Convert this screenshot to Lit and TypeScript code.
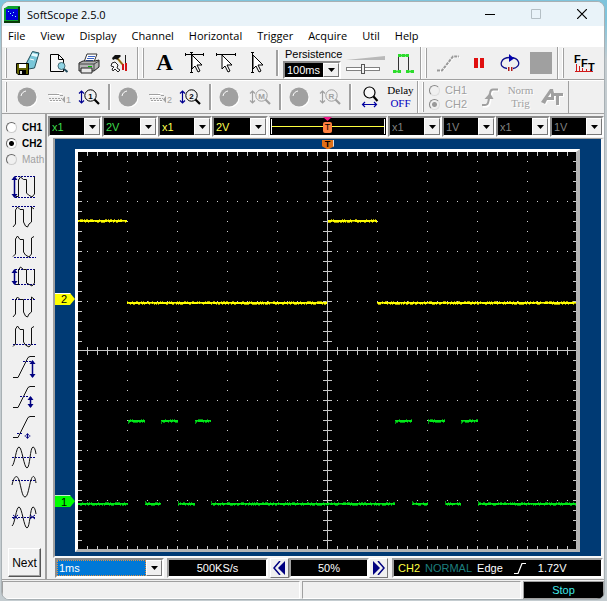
import { LitElement, html, svg, css, nothing } from "lit";
import type { SVGTemplateResult } from "lit";
import { customElement, property } from "lit/decorators.js";
import { classMap } from "lit/directives/class-map.js";
import { styleMap } from "lit/directives/style-map.js";

/* ---------- icons: toolbar glyphs use a 27x26 box, measurement glyphs 27x30 ---------- */

const ARROW = "M0 0V14L3 11L6 17L8 16L5 10H10Z";

const lens = (mark: string, ink: string, arrow: string) => svg`
  <path d="M5.5 7V19M3 9.5L5.5 7L8 9.5M3 16.5L5.5 19L8 16.5" stroke=${arrow} fill="none" stroke-width="1.2"/>
  <circle cx="14.5" cy="11.5" r="5.7" fill="none" stroke=${ink}/>
  <path d="M18.500 15.500L23 20" stroke=${ink} stroke-width="2.2"/>
  <text x="14.500" y="14.500" text-anchor="middle" font-size="8" font-weight="bold" fill=${ink}>${mark}</text>`;

const reference = (mark: string) => svg`
  <path d="M4 11.5H18M12 9.5H17M4 17.5H16" stroke="#fff" fill="none"/>
  <path d="M3 10.5H14L15 11.500H18" stroke="#a0a0a0" fill="none"/>
  <path d="M4 14.5H17M5 16.500H17" stroke="#a0a0a0" stroke-dasharray="2 1" fill="none"/>
  <path d="M17 15.500L20 12V19Z" fill="#a0a0a0"/>
  <text x="21" y="19" font-size="9" fill="#a0a0a0">${mark}</text>`;

const icons: Record<string, SVGTemplateResult> = {
  save: svg`
    <path d="M12.500 13L18.500 1.500L25 3L20.500 18L14.500 19Z" fill="#79c6d8" stroke="#24505c"/>
    <path d="M18.500 3L24 4.500L23 7L17 5.500Z" fill="#e8fbff"/><path d="M16 9L20 10" stroke="#fff"/>
    <path d="M2.500 13.500H14.500V24.500H4L2.500 23Z" fill="#606000" stroke="#000"/>
    <path d="M5 14H12V18H5Z" fill="#fff"/><path d="M5 20H12V24H5Z" fill="#000"/><path d="M6 21H8V24H6Z" fill="#ddd"/>`,
  preview: svg`
    <path d="M5.500 4.500H13.500L18.500 9.500V21.500H5.500Z" fill="#f8f8f8" stroke="#000"/>
    <path d="M13.500 4.500V9.500H18.500" fill="none" stroke="#000"/>
    <circle cx="16.500" cy="16" r="3.500" fill="#8fd4e4" stroke="#476d78"/>
    <path d="M19 19L22.500 22" stroke="#20485a" stroke-width="2"/>`,
  print: svg`
    <path d="M8 12L11 4H21L18 12Z" fill="#fff" stroke="#333"/>
    <path d="M12 6.500H19M11 8.500H18M10 10.500H17" stroke="#3b63c4"/>
    <path d="M3 13L7 11H19L23 10V17L18 21H3Z" fill="#b4b4b4" stroke="#222"/>
    <path d="M3 14H18L23 11M18 14V21" stroke="#444" fill="none"/>
    <path d="M5 18H16V23H5Z" fill="#e8e8e8" stroke="#222"/><path d="M12 16H16V17H12Z" fill="#0b0"/>`,
  tools: svg`
    <path d="M5 8L8 5H13L14 6L12 8L11 10L8 9L6 10Z" fill="#111"/>
    <path d="M11 9L16 15" stroke="#c09018" stroke-width="2"/>
    <path d="M11 9L16 15" stroke="#222" stroke-width="0.600"/>
    <path d="M15 14H17V20H15ZM18 13H20V21H18Z" fill="#d21414"/>
    <path d="M18.500 5V13" stroke="#222"/>
    <path d="M5 13L8 12L11 15L10 18L13 20L11 22L8 19L6 21L5 19L7 17L4 16Z" stroke="#222" fill="#f4f4f4"/>`,
  cursorBoth: svg`
    <path d="M3 4.500H22M3.500 3V6M21.500 3V6M9.500 3V22M8 2.500H11M8 22.500H11" stroke="#000"/>
    <g transform="translate(10 5)"><path d=${ARROW} fill="#fff" stroke="#000"/></g>`,
  cursorH: svg`
    <path d="M3 4.500H23M3.500 3V6M22.500 3V6" stroke="#000"/>
    <g transform="translate(9 5)"><path d=${ARROW} fill="#fff" stroke="#000"/></g>`,
  cursorV: svg`
    <path d="M8.500 2V22M7 2.500H10M7 22.500H10" stroke="#000"/>
    <g transform="translate(9 5)"><path d=${ARROW} fill="#fff" stroke="#000"/></g>`,
  pulse: svg`
    <path d="M8.500 7V20M18.500 7V20" stroke="#333"/>
    <path d="M8 5.500H19M3 21.500H11M16 21.500H24" stroke="#2bdc2b" stroke-width="2"/>
    <path d="M8 4H11V7H8ZM12 4H15V7H12ZM16 4H19V7H16ZM3 20H6V23H3ZM8 20H11V23H8ZM16 20H19V23H16ZM21 20H24V23H21Z" fill="#2bdc2b"/>`,
  interpolate: svg`
    <path d="M3 20.500H8L19 6.500H25" fill="none" stroke="#fff" transform="translate(1 1)"/>
    <path d="M3 20.500H8L19 6.500H25" fill="none" stroke="#999" stroke-width="2" stroke-dasharray="3 1"/>`,
  pause: svg`<path d="M9 8H13V18H9ZM15 8H19V18H15Z" fill="#e01010"/>`,
  loop: svg`
    <path d="M11 18.500C6 18 4.500 15 5.500 12C6.500 9 10 7.500 14 7.500C18 7.500 21.500 9 22.500 12C23.500 15 21 18 17 18.500" fill="none" stroke="#10108c" stroke-width="1.300"/>
    <path d="M13 4L18 8.500L13 12Z" fill="#0000b0"/>
    <path d="M12 17H13.500V21H12ZM15 17H16.500V21H15Z" fill="#b01818"/>`,
  stop: svg`<path d="M3 2H25V24H3Z" fill="#a0a0a0"/>`,
  fft: svg`
    <path d="M4 21.500H22M5.500 21V14M8.500 21V16M11.500 21V18M15.500 21V19M19.500 21V19" stroke="#d01818"/>
    <g font-weight="bold" font-size="11" fill="#000">
      <text x="3" y="13">F</text><text x="10" y="17">F</text><text x="17" y="21">T</text></g>`,
  ball: svg`
    <circle cx="14" cy="14" r="9.500" fill="#fff"/><circle cx="13" cy="13" r="9.500" fill="#a0a0a0"/>
    <path d="M7 12C7.500 9 9.500 7.500 12 7" stroke="#fff" fill="none"/>`,
  ref1: reference("1"),
  ref2: reference("2"),
  lens1: lens("1", "#000", "#000090"),
  lens2: lens("2", "#000", "#000090"),
  lensM: lens("M", "#a0a0a0", "#a0a0a0"),
  lensR: lens("R", "#a0a0a0", "#a0a0a0"),
  zoomH: svg`
    <circle cx="13.500" cy="8.500" r="5.500" fill="#f8f8f8" stroke="#000" stroke-width="1.200"/>
    <path d="M17.500 12.500L21.500 17" stroke="#000" stroke-width="2.200"/>
    <path d="M6 20.500H21M9 18L6.500 20.500L9 23M18 18L20.500 20.500L18 23" stroke="#0000a0" stroke-width="1.200" fill="none"/>`,
  edge: svg`
    <path d="M6 21.500H10Q12.500 21 13 17L14.500 9Q15 5.500 18 5.500H22" fill="none" stroke="#fff" stroke-width="2" transform="translate(1 1)"/>
    <path d="M6 21H9Q12 21 12.500 17L14 9Q14.500 5.500 17 5.500H22" fill="none" stroke="#a0a0a0" stroke-width="2"/>
    <path d="M8.500 15L14 9L17.500 15Z" fill="#a0a0a0"/>`,
  autoTrig: svg`
    <path d="M3 18L12 5H15L16 9H25V12H21L21 21H18L18 12H16L16 16H9L7 20Z" fill="#fff" transform="translate(1 1)"/>
    <path d="M3 18L12 5H15L16 9H25V12H21L21 21H18L18 12H16L16 16H9L7 20ZM10 13H13V9Z" fill="#a0a0a0" fill-rule="evenodd"/>`,
};

const NAVY = "#000080";
const vArrow = (x: number, a: number, b: number) => svg`
  <path d="M${x} ${a}V${b}" stroke=${NAVY} stroke-width="1.500"/>
  <path d="M${x} ${a - 1}L${x + 3} ${a + 3}H${x - 3}ZM${x} ${b + 1}L${x + 3} ${b - 3}H${x - 3}Z" fill=${NAVY}/>`;
const dash = (y: number, a = 1, b = 25) => svg`<path d="M${a} ${y}.5H${b}" stroke=${NAVY} stroke-dasharray="2 1"/>`;
const ink = (d: string) => svg`<path d=${d} fill="none" stroke="#111"/>`;
const SQUARE = "M5 24.500H7.500V8L9.500 5L12.500 7.500H15.500V21L17.500 23L21 25L23.500 22V5";
const SQUARE_TOP = "M2 25L4.500 22V8L6.500 5L9 7.500H12.500V20L14.500 24L16.500 25L18 22L20.500 20V5L23 7";
const SQUARE_LOW = "M2 24.500L4.500 22V7L6.500 4L9 7.500H12.500V20L14.500 23L18 25L20.500 22V6L23 4.500";
const SQUARE_MID = "M5 22.500H7.500V8L9.500 5L12.500 7.500H15.500V21L17.500 22L21 24L23.500 21V7";
const SLOPE = "M2 25.500H7L17 5.500L19 4.500H24";
const SINE = "M1 24C4 22 5 5 8 5S13 26 16 26S19 5 22 5Q24 5 25 12";

const measures: [string, SVGTemplateResult][] = [
  ["Peak to peak", svg`${vArrow(3.5, 5, 25)}${dash(4, 4)}${dash(25, 4)}${ink(SQUARE)}`],
  ["Maximum", svg`${dash(4)}${ink(SQUARE_TOP)}`],
  ["Minimum", svg`${dash(25, 3)}${ink(SQUARE_LOW)}`],
  ["Amplitude", svg`${vArrow(3.5, 8, 22)}${dash(7, 4)}${dash(22, 4)}${ink(SQUARE_MID)}`],
  ["Top", svg`${dash(7)}${ink(SQUARE_TOP)}`],
  ["Base", svg`${dash(22, 2)}${ink(SQUARE_LOW)}`],
  ["High level", svg`${ink(SLOPE)}${dash(9, 12, 20)}${vArrow(21.5, 9, 25)}`],
  ["Middle level", svg`${ink(SLOPE)}${dash(14, 9, 18)}${vArrow(19.5, 15, 25)}`],
  ["Low level", svg`${ink(SLOPE)}${dash(21, 6, 12)}${vArrow(16.5, 22, 26)}`],
  ["Mean", svg`${dash(15)}${ink(SINE)}`],
  ["Cycle mean", svg`${dash(8)}${ink("M1 13C3 4 6 2 8 8C10 14 11 25 14 25S18 14 20 8S24 4 25 11")}`],
  ["RMS", svg`${dash(15)}${ink(SINE)}<path d="M2 13L7 17M7 13L2 17M19 13L24 17M24 13L19 17" stroke=${NAVY}/>`],
];

const toolStyles = css`
  * { box-sizing: border-box; }
  button {
    display: flex; align-items: center; justify-content: center;
    padding: 0; border: 0; background: none; color: #000; font: inherit;
  }
  svg { display: block; flex: none; }
`;

/* ---------- drop-down with a raised arrow ---------- */
@customElement("scope-select")
export class ScopeSelect extends LitElement {
  @property() label = "";
  @property() value = "";
  @property() tone = "green";

  static styles = css`
    * { box-sizing: border-box; }
    :host { display: block; height: 20px; }
    .box {
      position: relative; height: 100%; background: #000;
      border: 2px solid; border-color: #8c8c8c #fff #fff #8c8c8c;
    }
    select {
      appearance: none; display: block; width: 100%; height: 100%; margin: 0;
      padding: 0 16px 0 2px; border: 0; border-radius: 0; background: #000;
      font: 11px "Liberation Sans", sans-serif; outline: none;
    }
    .green { color: #3fdc4c; }
    .yellow { color: #ffff50; }
    .grey { color: #808080; }
    .white { color: #fff; }
    .picked { color: #fff; background: #0078d7; border: 1px dotted #e09040; width: calc(100% - 16px); padding: 0 2px 0 1px; }
    .arrow {
      position: absolute; top: 0; right: 0; width: 16px; height: 100%; pointer-events: none;
      display: flex; align-items: center; justify-content: center; background: #f0f0f0;
      border: 1px solid; border-color: #fff #777 #777 #fff;
    }
  `;

  render() {
    return html`<div class="box">
      <select class=${this.tone} aria-label=${this.label}><option>${this.value}</option></select>
      <span class="arrow"><svg width="7" height="4" viewBox="0 0 7 4"><path d="M0 0H7L3.500 4Z"/></svg></span>
    </div>`;
  }
}

/* ---------- two rows of tools ---------- */
@customElement("scope-toolbars")
export class ScopeToolbars extends LitElement {
  static styles = [toolStyles, css`
    :host { display: block; background: #f0f0f0; font: 12px "Liberation Sans", sans-serif; }
    .row { display: flex; height: 34px; border-top: 1px solid #fff; border-bottom: 1px solid #a0a0a0; }
    .group { display: flex; align-items: center; border-right: 1px solid #a0a0a0; padding-right: 1px; }
    .group + .group { border-left: 1px solid #fff; }
    .last { border-right: 0; padding-right: 0; }
    .grip { width: 2px; height: 30px; margin: 0 5px 0 3px; border-left: 1px solid #fff; border-right: 1px solid #a0a0a0; flex: none; }
    .sep { width: 8px; height: 26px; flex: none; display: flex; justify-content: center; }
    .sep::before { content: ""; width: 2px; background: #a0a0a0; border-right: 1px solid #fff; }
    button { width: 31px; height: 30px; flex: none; }
    .letter { font: bold 23px "Liberation Serif", serif; }
    .persist { width: 58px; margin-left: 2px; align-self: stretch; }
    .persist label { display: block; height: 14px; line-height: 14px; font-size: 11px; padding-left: 2px; white-space: nowrap; }
    .persist scope-select { height: 18px; }
    .level { width: 47px; padding: 4px 3px 0 5px; }
    .level svg { width: 100%; }
    input[type="range"] { appearance: none; display: block; width: 34px; height: 12px; margin: 2px 0 0; background: none; }
    input[type="range"]::-webkit-slider-runnable-track { height: 4px; background: #fff; border: 1px solid #808080; }
    input[type="range"]::-webkit-slider-thumb { appearance: none; width: 4px; height: 10px; margin-top: -4px; background: #f0f0f0; border: 1px solid #555; }
    .words { font: 11px/13px "Liberation Serif", serif; flex-direction: column; }
    .off { color: #0000c0; }
    .dim { color: #a0a0a0; text-shadow: 1px 1px #fff; }
    .radios { width: 45px; font-size: 11px; }
    .radios label { display: flex; align-items: center; gap: 5px; height: 14px; color: #a0a0a0; text-shadow: 1px 1px #fff; }
    input[type="radio"] {
      appearance: none; width: 11px; height: 11px; margin: 0; border-radius: 50%; flex: none;
      border: 1px solid; border-color: #888 #ddd #ddd #888;
    }
    input[type="radio"]:checked { background: radial-gradient(#999 2px, transparent 3px); }
  `];

  private tool(icon: string, label: string, off = false) {
    return html`<button aria-label=${label} title=${label} ?disabled=${off}>
      <svg width="27" height="26" viewBox="0 0 27 26">${icons[icon]}</svg></button>`;
  }

  render() {
    const t = this.tool;
    const sep = html`<span class="sep"></span>`;
    const grip = html`<span class="grip"></span>`;
    return html`
      <div class="row">
        <div class="group">${grip}${t("save", "Save")}${t("preview", "Print preview")}${t("print", "Print")}${t("tools", "Options")}</div>
        <div class="group">${grip}
          <button class="letter">A</button>
          ${t("cursorBoth", "Both cursors")}${t("cursorH", "Horizontal cursors")}${t("cursorV", "Vertical cursors")}${sep}
          <div class="persist">
            <label>Persistence</label>
            <scope-select label="Persistence" value="100ms" tone="white"></scope-select>
          </div>
          <div class="level">
            <svg height="5" viewBox="0 0 39 5" preserveAspectRatio="none"><path d="M0 4L39 0V4Z" fill="#b8b8b8"/></svg>
            <input type="range" aria-label="Intensity" />
          </div>
          ${t("pulse", "Dots")}
        </div>
        <div class="group">${grip}${t("interpolate", "Interpolation", true)}${t("pause", "Pause")}${t("loop", "Run")}${t("stop", "Stop")}</div>
        <div class="group last">${grip}${t("fft", "FFT")}</div>
      </div>
      <div class="row">
        <div class="group">${grip}
          ${t("ball", "Channel 1")}${t("ref1", "Reference 1", true)}${t("lens1", "Scale 1")}${sep}
          ${t("ball", "Channel 2")}${t("ref2", "Reference 2", true)}${t("lens2", "Scale 2")}${sep}
          ${t("ball", "Math")}${t("lensM", "Scale math", true)}${sep}
          ${t("ball", "Reference")}${t("lensR", "Scale reference", true)}${sep}
          ${t("zoomH", "Zoom")}
          <button class="words"><span>Delay</span><span class="off">OFF</span></button>
        </div>
        <div class="group">${grip}
          <div class="radios">
            <label><input type="radio" name="src" disabled />CH1</label>
            <label><input type="radio" name="src" checked disabled />CH2</label>
          </div>
          ${t("edge", "Edge", true)}
          <button class="words dim" disabled><span>Norm</span><span>Trig</span></button>
          ${t("autoTrig", "Auto trigger", true)}
        </div>
      </div>`;
  }
}

/* ---------- measurement column ---------- */
@customElement("scope-measures")
export class ScopeMeasures extends LitElement {
  static styles = [toolStyles, css`
    :host {
      display: flex; flex-direction: column; padding: 6px 0 2px; background: #f0f0f0;
      border-right: 2px solid #a0a0a0; font: bold 10px "Liberation Sans", sans-serif;
    }
    label { display: flex; align-items: center; gap: 5px; height: 16px; padding-left: 4px; }
    .dim { color: #a0a0a0; font-weight: normal; }
    input {
      appearance: none; width: 11px; height: 11px; margin: 0; border-radius: 50%; background: #fff;
      border: 1px solid; border-color: #666 #ccc #ccc #666;
    }
    input:checked { background: radial-gradient(#000 2px, #fff 3px); }
    input:disabled { background: #f0f0f0; }
    .list { display: flex; flex-direction: column; padding: 5px 0 0 9px; }
    .list button { width: 27px; height: 30px; }
    .next {
      width: 33px; height: 29px; margin: 16px 0 0 6px; font: 12px "Liberation Sans", sans-serif;
      border: 1px solid; border-color: #fff #555 #555 #fff; box-shadow: inset -1px -1px #a0a0a0;
    }
  `];

  render() {
    return html`
      <label><input type="radio" name="ch" />CH1</label>
      <label><input type="radio" name="ch" checked />CH2</label>
      <label class="dim"><input type="radio" name="ch" disabled />Math</label>
      <div class="list">
        ${measures.map(([name, art]) => html`<button aria-label=${name} title=${name}>
          <svg width="27" height="30" viewBox="0 0 27 30">${art}</svg></button>`)}
      </div>
      <button class="next">Next</button>`;
  }
}

/* ---------- graticule and traces; 10x8 divisions of 50 units ---------- */
type Run = [from: number, to: number, y: number];

const yellowRuns: Run[] = [[1, 50, 69], [50, 250, 151], [251, 300, 69], [300, 499, 151]];
const greenRuns: Run[] = [
  [1, 51, 353], [51, 68, 270], [68, 84, 353], [84, 101, 270], [101, 118, 353], [118, 134, 270],
  [134, 318, 353], [318, 335, 270], [335, 351, 353], [351, 368, 270], [368, 384, 353],
  [384, 401, 270], [401, 499, 353],
];

/* Small repeatable noise, so a trace looks the same on every draw. */
const noise = (n: number) => {
  const v = Math.sin(n * 12.9898) * 43758.5453;
  return v - Math.floor(v);
};

/* With settle set, each run starts with a short step from the level before it. */
const trace = (runs: Run[], bright: string, dim: string, settle: boolean) => {
  let core = "";
  let fringe = "";
  runs.forEach(([from, to, y], i) => {
    core += `M${from} ${y}H${to}V${y + 2}H${from}Z`;
    if (settle && i > 0) {
      const top = runs[i - 1][2] > y ? y + 1 : y - 2;
      fringe += `M${from} ${top}h1v3h-1Z`;
    }
    for (let x = from; x < to; x++) {
      const n = noise(x + y);
      if (n < 0.35) fringe += `M${x} ${y - 1}h1v1h-1Z`;
      else if (n > 0.65) fringe += `M${x} ${y + 2}h1v1h-1Z`;
      if (n > 0.45 && n < 0.6) fringe += `M${x} ${y + 1}h1v1h-1Z`;
    }
  });
  return svg`<path d=${core} fill=${bright}/><path d=${fringe} fill=${dim}/>`;
};

const graticule = () => {
  let dots = "";
  let ticks = "M250 0h1v400h-1ZM0 200h500v1h-500Z";
  for (let x = 0; x <= 500; x += 10) {
    ticks += `M${x} 0h1v5h-1ZM${x} 396h1v4h-1ZM${x} 196h1v9h-1Z`;
    for (let y = 50; y < 400; y += 50) dots += `M${x} ${y}h1v1h-1Z`;
  }
  for (let y = 0; y <= 400; y += 10) {
    ticks += `M0 ${y}h5v1h-5ZM496 ${y}h4v1h-4ZM246 ${y}h9v1h-9Z`;
    for (let x = 50; x < 500; x += 50) dots += `M${x} ${y}h1v1h-1Z`;
  }
  return svg`<path d=${dots} fill="#d0d0d0"/><path d=${ticks} fill="#c8c8c8"/>`;
};

@customElement("scope-screen")
export class ScopeScreen extends LitElement {
  static styles = css`
    * { box-sizing: border-box; }
    :host {
      display: flex; padding: 10px 21px 4px 20px; background: #003a74;
      border: solid; border-width: 1px 3px 2px 2px; border-color: #a0a0a0 #f8f8f8 #f8f8f8 #a0a0a0;
    }
    .frame {
      position: relative; flex: 1; background: #000;
      border: solid; border-width: 3px 4px 3px 3px; border-color: #fff #b4b4b4 #b4b4b4 #fff;
    }
    .plot { position: absolute; inset: 0; width: 100%; height: 100%; display: block; }
    .mark {
      position: absolute; left: -23px; width: 20px; height: 12px; margin-top: -6px;
      display: flex; align-items: center; padding-left: 6px;
      clip-path: polygon(0 0, 75% 0, 100% 50%, 75% 100%, 0 100%);
      font: 11px/12px "Liberation Sans", sans-serif; color: #000;
      border-top: 1px solid #fff;
    }
    .one { background: #00ff00; }
    .two { background: #ffff00; }
    .trigger {
      position: absolute; top: -12px; left: 50%; width: 12px; height: 9px; margin-left: -5px;
      background: #e07018; color: #000; text-align: center; border-right: 1px solid #ddd;
      font: bold 9px/9px "Liberation Sans", sans-serif;
      clip-path: polygon(0 0, 100% 0, 100% 70%, 60% 100%, 40% 100%, 0 70%);
    }
  `;

  private marker(name: string, level: number) {
    const cls = { mark: true, one: name === "1", two: name === "2" };
    return html`<span class=${classMap(cls)} style=${styleMap({ top: `${level}%` })}>${name}</span>`;
  }

  render() {
    return html`<div class="frame">
      <svg class="plot" viewBox="1 1 498 398" preserveAspectRatio="none" shape-rendering="crispEdges" role="img" aria-label="Oscilloscope traces">
        ${graticule()}
        ${trace(yellowRuns, "#ffff00", "#a8a000", false)}
        ${trace(greenRuns, "#00e818", "#009010", true)}
      </svg>
      ${this.marker("2", 37)}${this.marker("1", 88)}
      <span class="trigger">T</span>
    </div>`;
  }
}

/* ---------- window ---------- */
@customElement("app-root")
export class AppRoot extends LitElement {
  static styles = [toolStyles, css`
    :host {
      display: block; height: 100vh; padding: 1px 2px 1px 1px; box-sizing: border-box;
      background: linear-gradient(#7fc4dc 20px, #c4ccd0 60px);
      font: 11px "Liberation Sans", sans-serif; color: #000;
    }
    .window {
      display: flex; flex-direction: column; height: 100%; overflow: hidden;
      border: 1px solid #a8b0b4; border-radius: 8px; background: #f0f0f0;
    }
    .title { display: flex; align-items: center; gap: 2px; height: 24px; flex: none; padding-left: 2px; background: #e9f3f9; font: 11px "Open Sans", sans-serif; }
    .title h1 { flex: 1; margin: 0 0 0 4px; font: inherit; }
    .title button { width: 44px; height: 24px; }
    nav { display: flex; gap: 15px; height: 20px; flex: none; padding-left: 6px; background: #fff; font: 11px/20px "Open Sans", sans-serif; }
    nav a { color: #000; text-decoration: none; }
    .body { display: flex; flex: 1; min-height: 0; }
    scope-measures { width: 45px; flex: none; }
    .bench { display: flex; flex-direction: column; flex: 1; min-width: 0; padding: 2px 0 1px 1px; }
    .channels { display: flex; height: 21px; flex: none; margin-bottom: 1px; }
    .channels scope-select { height: 21px; width: 54px; flex: none; }
    .channels .wide { width: 56px; }
    .memory {
      position: relative; flex: 1; margin: 0 1px; background: #000;
      border: solid; border-width: 2px 1px; border-color: #a0a0a0 #fff #fff #fff;
    }
    .memory::before { content: ""; position: absolute; left: 2px; right: 2px; top: 8px; height: 1px; background: #ffff40; }
    .memory::after { content: ""; position: absolute; left: 1px; right: 1px; top: 1px; bottom: 1px;
      border: solid #fff; border-width: 0 1px;
    }
    .memory span {
      position: absolute; left: 50%; top: 4px; width: 9px; height: 11px; margin-left: -5px; z-index: 1;
      background: #ff8040; color: #000; border-radius: 2px; text-align: center;
      font: 9px/11px "Liberation Sans", sans-serif;
    }
    .memory svg { position: absolute; left: 50%; top: -1px; margin-left: -5px; z-index: 1; }
    scope-screen { flex: 1; min-height: 200px; margin-left: 5px; }
    .readouts { display: flex; height: 20px; flex: none; margin-left: 7px; }
    .readouts scope-select { width: 109px; }
    .box {
      display: flex; align-items: center; justify-content: center; background: #000; color: #fff;
      border: 2px solid; border-color: #a0a0a0 #fff #fff #a0a0a0;
    }
    .rate { width: 101px; margin: 0 2px 0 3px; }
    .share { width: 80px; }
    .readouts button { width: 19px; border: 1px solid; border-color: #fff #777 #777 #fff; }
    .status-trig { flex: 1; margin: 0 1px 0 4px; justify-content: flex-start; padding-left: 4px; gap: 5px; }
    .yellow { color: #ffff40; }
    .teal { color: #1d7f7f; }
    .rise { margin-left: 6px; }
    .volts { margin-left: 6px; }
    footer { display: flex; gap: 2px; height: 20px; flex: none; padding-top: 1px; border-top: 1px solid #a0a0a0; }
    .panel { border: 1px solid; border-color: #a0a0a0 #fff #fff #a0a0a0; flex: 219; }
    .first { flex: 299; }
    .state { flex: 0 0 81px; background: #000; color: #40e8e8; border: 1px solid #a0a0a0; text-align: center; font-size: 11px; line-height: 16px; }
  `];

  private menus = ["File", "View", "Display", "Channel", "Horizontal", "Trigger", "Acquire", "Util", "Help"];

  private picker(label: string, value: string, tone: string, wide = false) {
    return html`<scope-select class=${wide ? "wide" : nothing} label=${label} value=${value} tone=${tone}></scope-select>`;
  }

  render() {
    return html`<div class="window">
      <header class="title">
        <svg width="17" height="17" viewBox="0 0 17 17">
          <path d="M1 2L4 0H16V14L13 16H0V2Z" fill="#10a030"/><path d="M2 3H14V14H2Z" fill="#0000d8"/>
          <path d="M0 16H15V1" fill="none" stroke="#083808" stroke-width="2"/>
          <path d="M4 5H5V6H4ZM6 7H7V8H6ZM9 6H10V7H9ZM8 9H9V10H8ZM11 10H12V11H11Z" fill="#8ff"/>
        </svg>
        <h1>SoftScope 2.5.0</h1>
        <button aria-label="Minimize"><svg width="10" height="10"><path d="M0 5.500H10" stroke="#000"/></svg></button>
        <button aria-label="Maximize" disabled><svg width="10" height="10"><path d="M0.500 0.500H9.500V9.500H0.500Z" fill="none" stroke="#b4bfc5"/></svg></button>
        <button aria-label="Close"><svg width="10" height="10"><path d="M0 0L10 10M10 0L0 10" stroke="#000" stroke-width="1.200"/></svg></button>
      </header>
      <nav>${this.menus.map((m) => html`<a href="#">${m}</a>`)}</nav>
      <scope-toolbars></scope-toolbars>
      <main class="body">
        <scope-measures></scope-measures>
        <div class="bench">
          <div class="channels">
            ${this.picker("CH1 probe", "x1", "green")}${this.picker("CH1 scale", "2V", "green", true)}
            ${this.picker("CH2 probe", "x1", "yellow")}${this.picker("CH2 scale", "2V", "yellow", true)}
            <div class="memory">
              <svg width="9" height="4" viewBox="0 0 9 4"><path d="M0 0H9L4.500 4Z" fill="#f01888"/></svg>
              <span>T</span>
            </div>
            ${this.picker("Math probe", "x1", "grey")}${this.picker("Math scale", "1V", "grey")}
            ${this.picker("Reference probe", "x1", "grey")}${this.picker("Reference scale", "1V", "grey")}
          </div>
          <scope-screen></scope-screen>
          <div class="readouts">
            ${this.picker("Time base", "1ms", "picked")}
            <output class="box rate">500KS/s</output>
            <button aria-label="Earlier"><svg width="13" height="14" viewBox="0 0 13 14"><path d="M7 0L1 7L7 14" fill="none" stroke="#000080" stroke-width="1.500"/><path d="M12 0V14L5 7Z" fill="#000080"/></svg></button>
            <output class="box share">50%</output>
            <button aria-label="Later"><svg width="13" height="14" viewBox="0 0 13 14"><path d="M6 0L12 7L6 14" fill="none" stroke="#000080" stroke-width="1.500"/><path d="M1 0V14L8 7Z" fill="#000080"/></svg></button>
            <div class="box status-trig">
              <span class="yellow">CH2</span><span class="teal">NORMAL</span><span>Edge</span>
              <svg class="rise" width="13" height="11" viewBox="0 0 13 11"><path d="M0 10.500H4L8 0.500H12" fill="none" stroke="#fff" stroke-width="1.200"/></svg>
              <span class="volts">1.72V</span>
            </div>
          </div>
        </div>
      </main>
      <footer><div class="panel first"></div><div class="panel"></div><div class="state" role="status">Stop</div></footer>
    </div>`;
  }
}
